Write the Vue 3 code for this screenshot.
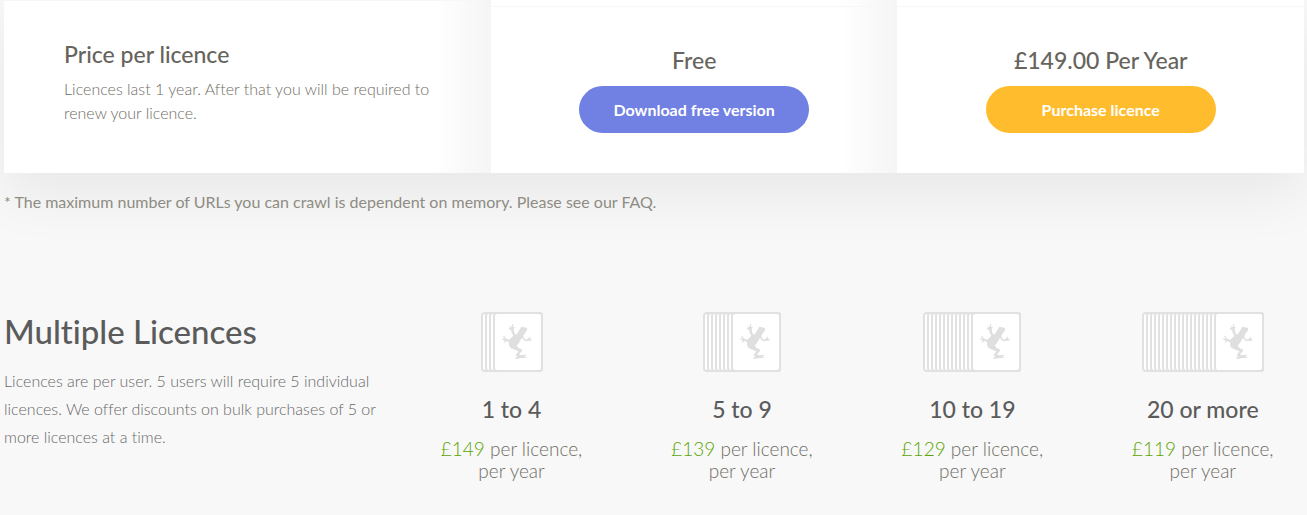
<script setup>
const tiers = [
  { range: '1 to 4', price: '£149', stacked: 3 },
  { range: '5 to 9', price: '£139', stacked: 7 },
  { range: '10 to 19', price: '£129', stacked: 12 },
  { range: '20 or more', price: '£119', stacked: 18 },
]
const pitch = 4
const iconWidth = (n) => n * pitch + 50
</script>

<template>
  <main class="page">
    <section class="pricing">
      <div class="cell intro">
        <h3 class="cell-title">Price per licence</h3>
        <p class="cell-text">Licences last 1 year. After that you will be required to renew your licence.</p>
      </div>
      <div class="cell plan shaded">
        <div class="plan-body">
          <p class="price">Free</p>
          <a class="btn btn-free" href="#download">Download free version</a>
        </div>
      </div>
      <div class="cell plan">
        <div class="plan-body">
          <p class="price">£149.00 Per Year</p>
          <a class="btn btn-buy" href="#purchase">Purchase licence</a>
        </div>
      </div>
    </section>

    <p class="note">* The maximum number of URLs you can crawl is dependent on memory. Please see our FAQ.</p>

    <section class="multiple">
      <div class="summary">
        <h2 class="heading">Multiple Licences</h2>
        <p class="summary-text">Licences are per user. 5 users will require 5 individual licences. We offer discounts on bulk purchases of 5 or more licences at a time.</p>
      </div>
      <ul class="tiers">
        <li v-for="tier in tiers" :key="tier.range" class="tier">
          <svg
            class="stack"
            :width="iconWidth(tier.stacked)"
            height="60"
            :viewBox="`0 0 ${iconWidth(tier.stacked)} 60`"
            aria-hidden="true"
          >
            <rect
              v-for="n in tier.stacked + 1"
              :key="n"
              :x="(n - 1) * pitch + 1"
              y="1"
              :width="iconWidth(tier.stacked) - (n - 1) * pitch - 2"
              height="58"
              rx="3"
              fill="#fff"
              stroke="#e1e1e1"
              stroke-width="2"
            />
            <g :transform="`translate(${tier.stacked * pitch} 0) scale(0.33333) translate(-66 -21)`">
              <path
                fill="#dfdfdf"
                d="M113 60L119 66L122 65L124 57L127 58L126 66L132 65L128 72L130 84L136 89L145 76L150 67Q153 64 157 67L167 68Q170 72 168 76L162 84L157 92L158 98L164 104L170 102L176 95L178 96L176 102L184 100L178 105L184 108L173 107L162 109L153 99L149 104L144 114L137 122L144 130L152 133Q155 137 151 140L144 148L149 151L164 149L166 152L159 154L168 159L150 159L136 162L132 159L140 154L134 152L136 147L143 139L134 136L119 129Q113 124 114 112L107 108L102 112L98 116L101 107L93 103L94 100L102 102L96 94L99 92L106 101L115 104L120 99L127 92L122 84L121 77L112 70L118 69Z"
              />
            </g>
          </svg>
          <h3 class="range">{{ tier.range }}</h3>
          <p class="rate"><span class="amount">{{ tier.price }}</span> per licence,<br />per year</p>
        </li>
      </ul>
    </section>
  </main>
</template>

<style>
body {
  margin: 0;
  background: #f8f8f8;
  overflow: hidden;
}
</style>

<style scoped>
.page {
  padding: 0 3px 0 4px;
  font-family: Lato, "Liberation Sans", sans-serif;
  font-variant-ligatures: none;
  color: #6f6d64;
}
h2, h3, p, ul {
  margin: 0;
  padding: 0;
}
.pricing {
  display: grid;
  grid-template-columns: 37.45% 1fr 1fr;
  background: #fff;
  box-shadow: 0 20px 60px rgba(0, 0, 0, 0.07);
}
.cell {
  box-sizing: border-box;
}
.intro {
  padding: 39px 56px 46px 60px;
  border-top: 1px solid #f7f7f7;
  background: linear-gradient(to left, #f5f5f5, #fff 56px);
}
.cell-title {
  font-size: 23px;
  line-height: 28px;
  font-weight: 500;
  color: #66645c;
}
.cell-text {
  margin-top: 9px;
  font-size: 16px;
  line-height: 24px;
  font-weight: 300;
}
.plan {
  padding-top: 6px;
}
.shaded {
  background: linear-gradient(to left, #f5f5f5, #fff 56px);
}
.plan-body {
  display: flex;
  flex-direction: column;
  align-items: center;
  padding: 39px 0 40px;
  border-top: 1px solid #f7f7f7;
}
.price {
  font-size: 23px;
  line-height: 28px;
  font-weight: 500;
  color: #66645c;
}
.btn {
  width: 230px;
  margin-top: 12px;
  border-radius: 24px;
  font-size: 16px;
  line-height: 47px;
  font-weight: 700;
  text-align: center;
  text-decoration: none;
  color: #fff;
}
.btn-free {
  background: #7080e3;
}
.btn-buy {
  background: #ffbd2e;
}
.note {
  margin-top: 17px;
  font-size: 16px;
  line-height: 24px;
  font-weight: 400;
  color: #8e8c83;
}
.multiple {
  display: flex;
  justify-content: space-between;
  margin-top: 98px;
}
.summary {
  width: 29%;
}
.heading {
  font-size: 33px;
  line-height: 38px;
  font-weight: 500;
  color: #5b5b5b;
}
.summary-text {
  margin-top: 17px;
  font-size: 16px;
  line-height: 28px;
  font-weight: 300;
  color: #686868;
}
.tiers {
  display: grid;
  grid-template-columns: repeat(4, 1fr);
  width: 70.9%;
  margin-right: -14px;
  list-style: none;
}
.tier {
  text-align: center;
}
.stack {
  display: block;
  margin: 0 auto;
}
.range {
  margin-top: 23px;
  font-size: 23px;
  line-height: 28px;
  font-weight: 500;
  color: #5b5b5b;
}
.rate {
  margin-top: 15px;
  font-size: 19px;
  line-height: 22px;
  font-weight: 300;
}
.amount {
  color: #5aa600;
}
</style>
